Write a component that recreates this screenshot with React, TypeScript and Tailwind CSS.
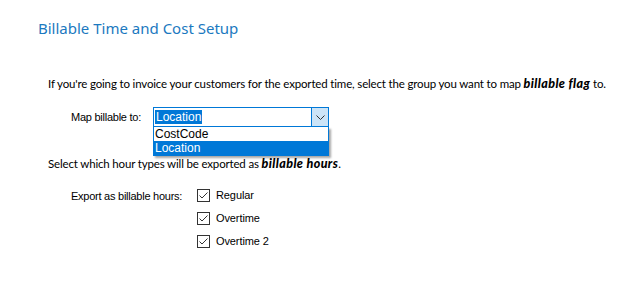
export default function App() {
  const hours = ["Regular", "Overtime", "Overtime 2"]

  return (
    <div className="w-[632px] h-[300px] bg-white overflow-hidden relative">
      <h1 className="pl-[38px] pt-[18px] text-[15px] leading-[21px] text-[#1b79c0] font-['Noto_Sans',sans-serif]">
        Billable Time and Cost Setup
      </h1>

      <p className="pl-[48px] mt-[37px] whitespace-nowrap text-[11.5px] tracking-[-0.16px] leading-[16px] text-black font-['Lato',sans-serif]">
        If you're going to invoice your customers for the exported time, select the group you want to map{" "}
        <b className="italic font-black text-[12.5px] tracking-[0.4px]">billable flag</b> to.
      </p>

      <div className="flex items-center mt-[15px] h-[20px]">
        <span className="pl-[71px] w-[153px] text-[11px] tracking-[-0.25px] text-black font-['Liberation_Sans',sans-serif]">
          Map billable to:
        </span>
        <div className="relative">
          <div className="flex w-[176px] h-[20px] border border-[#0078d7] bg-white">
            <div className="flex-1 flex items-center pl-[1px]">
              <span className="bg-[#0078d7] text-white text-[12px] leading-[14px] px-[1px] font-['Liberation_Sans',sans-serif]">
                Location
              </span>
            </div>
            <div className="w-[17px] border-l border-[#0078d7] bg-[#cce4f7] flex items-center justify-center">
              <svg width="9" height="5" viewBox="0 0 9 5" fill="none">
                <path d="M0.5 0.5 L4.5 4.5 L8.5 0.5" stroke="#333" strokeWidth="1" />
              </svg>
            </div>
          </div>
          <ul className="absolute left-0 top-[20px] w-[176px] border border-[#0078d7] border-t-0 bg-white shadow-[2px_2px_2px_rgba(0,0,0,0.35)] text-[12px] leading-[14px] font-['Liberation_Sans',sans-serif]">
            <li className="pl-[1px] text-black">CostCode</li>
            <li className="pl-[1px] bg-[#0078d7] text-white">Location</li>
          </ul>
        </div>
      </div>

      <p className="pl-[48px] mt-[29px] whitespace-nowrap text-[11.5px] tracking-[-0.16px] leading-[16px] text-black font-['Lato',sans-serif]">
        Select which hour types will be exported as{" "}
        <b className="italic font-black text-[12.5px] tracking-[0.4px]">billable hours</b>.
      </p>

      <div className="flex mt-[17px]">
        <span className="pl-[71px] w-[197px] text-[11px] tracking-[-0.25px] leading-[13px] pt-[1px] text-black font-['Liberation_Sans',sans-serif]">
          Export as billable hours:
        </span>
        <div className="flex flex-col gap-[10px]">
          {hours.map((h) => (
            <label key={h} className="flex items-center gap-[6px] h-[13px]">
              <span className="w-[13px] h-[13px] border border-[#333] bg-white flex items-center justify-center">
                <svg width="11" height="11" viewBox="0 0 11 11" fill="none">
                  <path d="M1.5 5.5 L4 8 L9.5 2.5" stroke="#333" strokeWidth="1" />
                </svg>
              </span>
              <span className="text-[11px] tracking-[-0.1px] text-black font-['Liberation_Sans',sans-serif]">{h}</span>
            </label>
          ))}
        </div>
      </div>
    </div>
  )
}
